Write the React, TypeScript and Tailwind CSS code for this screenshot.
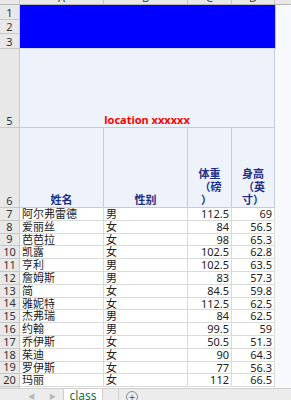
import React from "react";

interface Person {
    name: string;
    sex: string;
    weight: string;
    height: string;
}

const people: Person[] = [
    { name: "阿尔弗雷德", sex: "男", weight: "112.5", height: "69" },
    { name: "爱丽丝", sex: "女", weight: "84", height: "56.5" },
    { name: "芭芭拉", sex: "女", weight: "98", height: "65.3" },
    { name: "凯露", sex: "女", weight: "102.5", height: "62.8" },
    { name: "亨利", sex: "男", weight: "102.5", height: "63.5" },
    { name: "詹姆斯", sex: "男", weight: "83", height: "57.3" },
    { name: "简", sex: "女", weight: "84.5", height: "59.8" },
    { name: "雅妮特", sex: "女", weight: "112.5", height: "62.5" },
    { name: "杰弗瑞", sex: "男", weight: "84", height: "62.5" },
    { name: "约翰", sex: "男", weight: "99.5", height: "59" },
    { name: "乔伊斯", sex: "女", weight: "50.5", height: "51.3" },
    { name: "茱迪", sex: "女", weight: "90", height: "64.3" },
    { name: "罗伊斯", sex: "女", weight: "77", height: "56.3" },
    { name: "玛丽", sex: "女", weight: "112", height: "66.5" },
];

const RowHead = ({ n, h }: { n: string; h: string }) => (
    <div
        className={`w-[20px] shrink-0 ${h} overflow-hidden bg-[#e8e8e8] border-r border-b border-[#c8c8c8] flex items-end justify-center text-[11px] leading-[12px] text-[#333]`}
    >
        <span>{n}</span>
    </div>
);

const HeadCell = ({ w, children }: { w: string; children: React.ReactNode }) => (
    <div
        className={`${w} shrink-0 h-full border-r border-[#c6ccd6] flex items-end justify-center text-center font-bold text-[11px] leading-[13px] text-[#1f2f86] pb-[1px]`}
    >
        {children}
    </div>
);

const App: React.FC = () => {
    return (
        <div
            className="w-[291px] h-[400px] overflow-hidden bg-[#f8f9fd] flex flex-col"
            style={{ fontFamily: '"Noto Sans", "Noto Sans CJK SC", sans-serif' }}
        >
            {/* column letters, mostly scrolled away */}
            <div className="h-[5px] shrink-0 overflow-hidden flex bg-[#e8e8e8] border-b border-[#b8b8b8]">
                <div className="w-[20px] shrink-0 border-r border-[#c8c8c8]" />
                {[
                    { l: "A", w: "w-[84px]" },
                    { l: "B", w: "w-[84px]" },
                    { l: "C", w: "w-[44px]" },
                    { l: "D", w: "w-[43px]" },
                ].map((c) => (
                    <div
                        key={c.l}
                        className={`${c.w} shrink-0 border-r border-[#c8c8c8] flex justify-center`}
                    >
                        <span className="text-[11px] leading-[11px] -mt-[8px] text-[#444]">{c.l}</span>
                    </div>
                ))}
            </div>

            {/* rows 1-3: blue band */}
            <div className="flex shrink-0">
                <div className="flex flex-col">
                    <RowHead n="1" h="h-[15px]" />
                    <RowHead n="2" h="h-[14px]" />
                    <RowHead n="3" h="h-[15px]" />
                </div>
                <div className="w-[255px] shrink-0 bg-[#0000ff] border-b border-[#d6dcea]" />
                <div className="flex-1 border-l border-[#c8c8c8]" />
            </div>

            {/* row 5: title */}
            <div className="flex shrink-0 h-[79px]">
                <RowHead n="5" h="h-[79px]" />
                <div className="w-[255px] shrink-0 bg-[#eef2fa] border-b border-r border-[#c6ccd6] flex items-end justify-center pb-[1px]">
                    <span className="text-[11px] leading-[13px] font-bold text-[#ff0000]">location xxxxxx</span>
                </div>
                <div className="flex-1" />
            </div>

            {/* row 6: headers */}
            <div className="flex shrink-0 h-[80px]">
                <RowHead n="6" h="h-[80px]" />
                <div className="w-[255px] shrink-0 h-full flex bg-[#eef2fa] border-b border-[#c6ccd6]">
                    <HeadCell w="w-[84px]">姓名</HeadCell>
                    <HeadCell w="w-[84px]">性别</HeadCell>
                    <HeadCell w="w-[44px]">
                        <div className="flex flex-col items-center">
                            <span>体重</span>
                            <span className="pl-[2px]">（磅</span>
                            <span className="-ml-[6px]">）</span>
                        </div>
                    </HeadCell>
                    <HeadCell w="w-[43px]">
                        <div className="flex flex-col items-center">
                            <span>身高</span>
                            <span className="pl-[2px]">（英</span>
                            <span>寸）</span>
                        </div>
                    </HeadCell>
                </div>
                <div className="flex-1" />
            </div>

            {/* data rows */}
            {people.map((p, i) => (
                <div key={p.name} className="flex shrink-0 h-[12.8px]">
                    <RowHead n={String(i + 7)} h="h-[12.8px]" />
                    <div className="w-[255px] shrink-0 flex bg-white border-b border-[#dadada] text-[11px] leading-[11.8px] text-[#222] overflow-hidden">
                        <div className="w-[84px] shrink-0 border-r border-[#dadada] pl-[2px] whitespace-nowrap">{p.name}</div>
                        <div className="w-[84px] shrink-0 border-r border-[#dadada] pl-[2px]">{p.sex}</div>
                        <div className="w-[44px] shrink-0 border-r border-[#dadada] text-right pr-[2px]">{p.weight}</div>
                        <div className="w-[43px] shrink-0 border-r border-[#dadada] text-right pr-[2px]">{p.height}</div>
                    </div>
                    <div className="flex-1" />
                </div>
            ))}
            <div className="flex h-[1px] shrink-0">
                <div className="w-[20px] bg-[#e8e8e8] border-r border-[#c8c8c8]" />
                <div className="w-[255px] bg-white border-r border-[#dadada]" />
            </div>

            {/* sheet tabs */}
            <div className="flex-1 flex items-stretch bg-[#ececec] border-t border-[#cfcfcf]">
                <div className="w-[21px] shrink-0" />
                <div className="w-[42px] shrink-0 flex items-center justify-around text-[#b8b8b8] text-[7px] pt-[2px]">
                    <span>◀</span>
                    <span>▶</span>
                </div>
                <div className="w-[40px] shrink-0 bg-white flex justify-center items-start border-x border-[#cfcfcf]">
                    <span className="text-[12px] leading-[14px] text-[#217346]">class</span>
                </div>
                <div className="w-[16px] shrink-0 border-r border-[#cfcfcf]" />
                <div className="w-[26px] shrink-0 flex items-start justify-center pt-[2px]">
                    <div className="w-[12px] h-[12px] rounded-full border border-[#8a8a8a] flex items-center justify-center text-[10px] leading-none text-[#555]">
                        +
                    </div>
                </div>
            </div>
        </div>
    );
};

export default App;
